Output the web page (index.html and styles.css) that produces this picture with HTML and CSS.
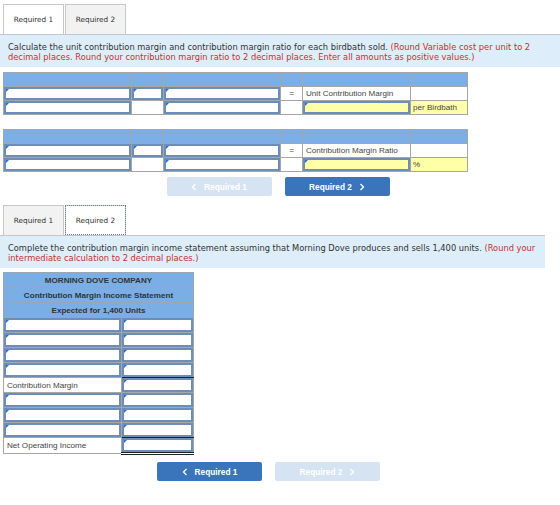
FILE: index.html
```html
<!DOCTYPE html>
<html lang="en">
<head>
  <meta charset="UTF-8">
  <title>Contribution Margin</title>
  <link rel="stylesheet" href="styles.css">
</head>
<body>
  <div class="part part-one">
    <div class="tabs">
      <div class="tab active">Required 1</div>
      <div class="tab">Required 2</div>
    </div>
    <div class="instr">
      Calculate the unit contribution margin and contribution margin ratio for each birdbath sold.
      <span class="red">(Round Variable cost per unit to 2 decimal places. Round your contribution margin ratio to 2 decimal places. Enter all amounts as positive values.)</span>
    </div>

    <table class="grid">
      <tr class="head">
        <td class="c1"></td><td class="c2"></td><td class="c3"></td><td class="c4"></td><td class="c5"></td><td class="c6"></td>
      </tr>
      <tr>
        <td class="in"><div class="field"></div></td>
        <td class="in"><div class="field"></div></td>
        <td class="in"><div class="field"></div></td>
        <td class="eq">=</td>
        <td class="label">Unit Contribution Margin</td>
        <td></td>
      </tr>
      <tr>
        <td class="in"><div class="field"></div></td>
        <td></td>
        <td class="in"><div class="field"></div></td>
        <td></td>
        <td class="in"><div class="field yellow"></div></td>
        <td class="unit">per Birdbath</td>
      </tr>
    </table>

    <table class="grid second">
      <tr class="head">
        <td class="c1"></td><td class="c2"></td><td class="c3"></td><td class="c4"></td><td class="c5"></td><td class="c6"></td>
      </tr>
      <tr>
        <td class="in"><div class="field"></div></td>
        <td class="in"><div class="field"></div></td>
        <td class="in"><div class="field"></div></td>
        <td class="eq">=</td>
        <td class="label">Contribution Margin Ratio</td>
        <td></td>
      </tr>
      <tr>
        <td class="in"><div class="field"></div></td>
        <td></td>
        <td class="in"><div class="field"></div></td>
        <td></td>
        <td class="in"><div class="field yellow"></div></td>
        <td class="unit">%</td>
      </tr>
    </table>

    <div class="nav">
      <div class="btn disabled"><svg width="6" height="8" viewBox="0 0 6 8"><polyline points="4.5,1 1.5,4 4.5,7" fill="none" stroke="#fff" stroke-width="1.3"/></svg>Required 1</div>
      <div class="btn">Required 2<svg width="6" height="8" viewBox="0 0 6 8"><polyline points="1.5,1 4.5,4 1.5,7" fill="none" stroke="#fff" stroke-width="1.3"/></svg></div>
    </div>
  </div>

  <div class="part part-two">
    <div class="tabs">
      <div class="tab">Required 1</div>
      <div class="tab active focus">Required 2</div>
    </div>
    <div class="instr">
      Complete the contribution margin income statement assuming that Morning Dove produces and sells 1,400 units.
      <span class="red">(Round your intermediate calculation to 2 decimal places.)</span>
    </div>

    <table class="stmt">
      <tr class="title"><td colspan="2">MORNING DOVE COMPANY</td></tr>
      <tr class="title"><td colspan="2">Contribution Margin Income Statement</td></tr>
      <tr class="title"><td colspan="2">Expected for 1,400 Units</td></tr>
      <tr><td class="in s1"><div class="field"></div></td><td class="in s2"><div class="field"></div></td></tr>
      <tr><td class="in"><div class="field"></div></td><td class="in"><div class="field"></div></td></tr>
      <tr><td class="in"><div class="field"></div></td><td class="in"><div class="field"></div></td></tr>
      <tr><td class="in"><div class="field"></div></td><td class="in rule"><div class="field"></div></td></tr>
      <tr><td class="label">Contribution Margin</td><td class="in"><div class="field"></div></td></tr>
      <tr><td class="in"><div class="field"></div></td><td class="in"><div class="field"></div></td></tr>
      <tr><td class="in"><div class="field"></div></td><td class="in"><div class="field"></div></td></tr>
      <tr><td class="in"><div class="field"></div></td><td class="in rule"><div class="field"></div></td></tr>
      <tr><td class="label">Net Operating Income</td><td class="in total"><div class="field"></div></td></tr>
    </table>

    <div class="nav">
      <div class="btn"><svg width="6" height="8" viewBox="0 0 6 8"><polyline points="4.5,1 1.5,4 4.5,7" fill="none" stroke="#fff" stroke-width="1.3"/></svg>Required 1</div>
      <div class="btn disabled">Required 2<svg width="6" height="8" viewBox="0 0 6 8"><polyline points="1.5,1 4.5,4 1.5,7" fill="none" stroke="#fff" stroke-width="1.3"/></svg></div>
    </div>
  </div>
</body>
</html>
```

FILE: styles.css
```css
body {
  margin: 0;
  padding: 0;
  background-color: #fff;
  color: #333;
  font-family: "DejaVu Sans", Verdana, sans-serif;
}

.part-two {
  width: 545px;
  margin-top: 9px;
}

.tabs {
  display: flex;
  gap: 1px;
  padding: 4px 0 0 3px;
}

.part-two .tabs {
  padding-top: 0;
}

.tab {
  width: 59px;
  height: 29px;
  border: 1px solid #c8c8c8;
  border-bottom: none;
  background-color: #f2f2f2;
  font-size: 7.3px;
  display: flex;
  align-items: center;
  justify-content: center;
}

.tab.active {
  background-color: #fff;
}

.tab.focus {
  outline: 1px dotted #6a7f9a;
  outline-offset: -1px;
}

.instr {
  background-color: #ddedf9;
  border-top: 1px solid #c6c6c6;
  padding: 7px 8px 5px 8px;
  font-size: 8.3px;
  line-height: 10px;
}

.red {
  color: #c9302c;
}

/* unit tables */
.grid {
  border-collapse: collapse;
  margin: 5px 0 0 3px;
  font-family: "Liberation Sans", Arial, sans-serif;
  font-size: 8.1px;
  color: #444;
}

.grid.second {
  margin-top: 14px;
}

.grid td,
.stmt td {
  border: 1px solid #a6a6a6;
  padding: 0;
  height: 13px;
}

.grid tr.head td {
  background-color: #7aaee4;
}

.c1 { width: 127px; }
.c2 { width: 31px; }
.c3 { width: 116px; }
.c4 { width: 21px; }
.c5 { width: 107px; }
.c6 { width: 56px; }

.eq {
  text-align: center;
}

.label {
  padding-left: 3px !important;
}

.unit {
  background-color: #ffffa8;
  padding-left: 2px !important;
}

td.in {
  position: relative;
}

.field {
  height: 100%;
  box-sizing: border-box;
  border: 2px solid #6b8db8;
  background-color: #fff;
}

.field.yellow {
  background-color: #ffffa8;
}

.field::before {
  content: "";
  position: absolute;
  top: 2px;
  left: 2px;
  border-top: 3px solid #2f6fd0;
  border-right: 3px solid transparent;
}

/* statement */
.stmt {
  border-collapse: collapse;
  margin: 4px 0 0 3px;
  font-family: "Liberation Sans", Arial, sans-serif;
  font-size: 8.1px;
  color: #444;
}

.stmt tr {
  height: 15px;
}

.stmt td {
  height: 14px;
}

.stmt .s1 { width: 117px; }
.stmt .s2 { width: 71px; }

.stmt tr.title td {
  background-color: #7aaee4;
  text-align: center;
  font-weight: bold;
  color: #333;
  border-color: #9aa6b3;
}

.stmt td.rule {
  border-bottom: 1px solid #222;
}

.stmt td.total {
  border-bottom: 3px double #222;
}

/* buttons */
.nav {
  display: flex;
  justify-content: center;
  gap: 13px;
  margin-top: 5px;
  padding-right: 4px;
}

.part-two .nav {
  margin-top: 7px;
  padding-right: 8px;
}

.btn {
  width: 105px;
  height: 19px;
  background-color: #3a74ba;
  color: #fff;
  border-radius: 2px;
  font-family: "Liberation Sans", Arial, sans-serif;
  font-weight: bold;
  font-size: 8.3px;
  display: flex;
  align-items: center;
  justify-content: center;
  gap: 7px;
}

.btn.disabled {
  background-color: #d5e3f2;
}
```
